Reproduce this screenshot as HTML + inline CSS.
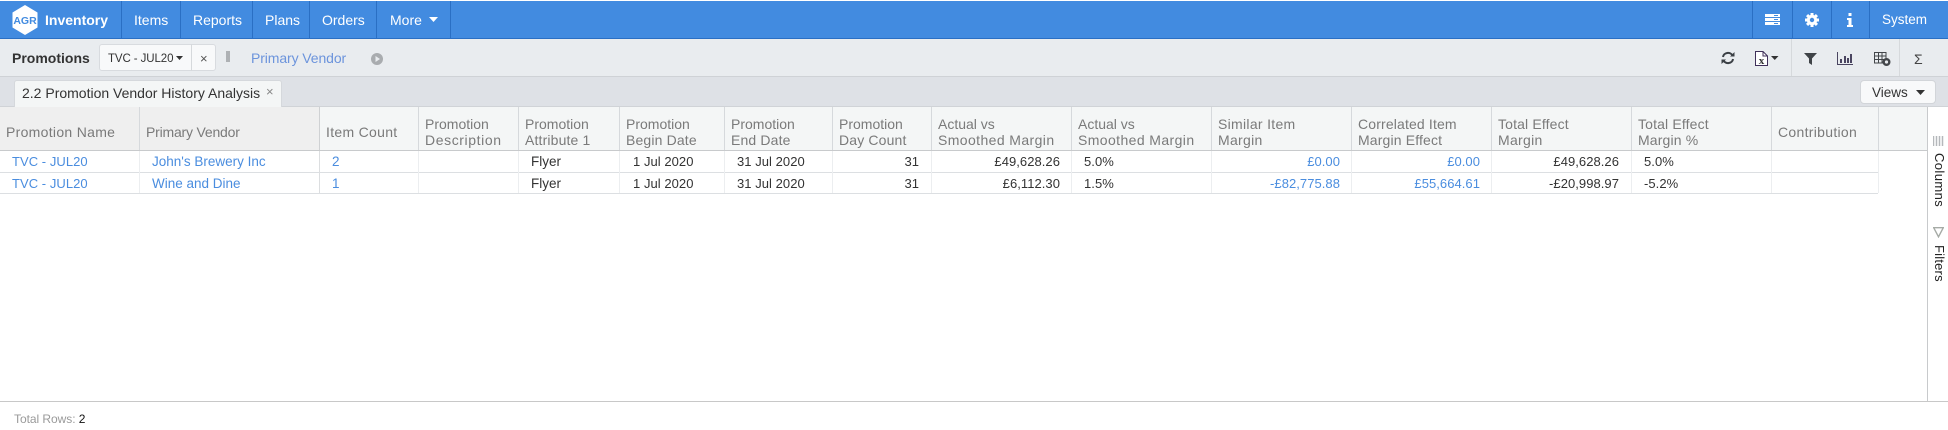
<!DOCTYPE html>
<html><head><meta charset="utf-8"><style>
html,body{margin:0;padding:0;width:1948px;height:430px;overflow:hidden;background:#fff;font-family:"Liberation Sans",sans-serif;font-size:14px;color:#333}
.a{position:absolute}
.t{position:absolute;white-space:nowrap;line-height:18px;height:18px}
.n{color:#fff;top:11px}
.h{color:#7a7a7a;letter-spacing:.15px}
.l{color:#4a8ddf}
.c{font-size:13.5px}
.m{font-size:13px;letter-spacing:.05px}
.r{transform:translateX(-100%)}
.v{background:#d6d9dc;width:1px;position:absolute}
</style></head><body>
<div class="a" style="left:0;top:1px;width:1948px;height:37px;background:#428be0;border-bottom:1px solid #2a6fc4"></div>
<svg class="a" style="left:11px;top:4px" width="28" height="32" viewBox="0 0 28 32"><path d="M14 1L26.500 8.500V23.500L14 31L1.500 23.500V8.500Z" fill="#fff"/><text x="14" y="20" font-size="10.500" font-weight="700" fill="#428be0" text-anchor="middle" font-family="Liberation Sans">AGR</text></svg>
<div class="t n" style="left:45px;font-weight:700">Inventory</div>
<div class="v" style="left:121px;top:1px;height:37px;background:#2a6fc4"></div>
<div class="t n" style="left:134px">Items</div>
<div class="v" style="left:180px;top:1px;height:37px;background:#2a6fc4"></div>
<div class="t n" style="left:193px">Reports</div>
<div class="v" style="left:252px;top:1px;height:37px;background:#2a6fc4"></div>
<div class="t n" style="left:265px">Plans</div>
<div class="v" style="left:309px;top:1px;height:37px;background:#2a6fc4"></div>
<div class="t n" style="left:322px">Orders</div>
<div class="v" style="left:376px;top:1px;height:37px;background:#2a6fc4"></div>
<div class="t n" style="left:390px">More</div>
<svg class="a" style="left:429px;top:17px" width="9" height="5"><path d="M0 0H9L4.500 5Z" fill="#fff"/></svg>
<div class="v" style="left:450px;top:1px;height:37px;background:#2a6fc4"></div>
<div class="v" style="left:1752px;top:1px;height:37px;background:#2a6fc4"></div>
<div class="v" style="left:1792px;top:1px;height:37px;background:#2a6fc4"></div>
<div class="v" style="left:1831px;top:1px;height:37px;background:#2a6fc4"></div>
<div class="v" style="left:1869px;top:1px;height:37px;background:#2a6fc4"></div>
<svg class="a" style="left:1765px;top:14px" width="15" height="11"><path d="M0 0H15V3H0ZM0 4H15V7H0ZM0 8H15V11H0Z" fill="#fff"/><path d="M9 1.500H13M9 5.500H13M9 9.500H13" stroke="#428be0" stroke-width="1"/></svg>
<svg class="a" style="left:1805px;top:13px" width="14" height="14" viewBox="0 0 14 14"><g fill="#fff"><rect x="5.500" y="0" width="3" height="14"/><rect x="0" y="5.500" width="14" height="3"/><rect x="5.500" y="0" width="3" height="14" transform="rotate(45 7 7)"/><rect x="5.500" y="0" width="3" height="14" transform="rotate(-45 7 7)"/><circle cx="7" cy="7" r="5.200"/></g><circle cx="7" cy="7" r="2.200" fill="#428be0"/></svg>
<svg class="a" style="left:1847px;top:13px" width="6" height="14"><path d="M1.500 0H4.500V3H1.500ZM0 5H4.500V12H6V14H0V12H1.500V7H0Z" fill="#fff"/></svg>
<div class="t n" style="left:1882px;font-size:13.500px">System</div>

<div class="a" style="left:0;top:39px;width:1948px;height:37px;background:#e9ecef;border-bottom:1px solid #cfd2d6"></div>
<div class="a" style="left:0;top:77px;width:1948px;height:29px;background:#dee1e6;border-bottom:1px solid #d0d3d7"></div>
<div class="t" style="left:12px;top:49px;font-weight:700">Promotions</div>
<div class="a" style="left:99px;top:44px;width:117px;height:27px;background:#f8f9fa;border:1px solid #d8dbdf;border-radius:3px;box-sizing:border-box"></div>
<div class="v" style="left:191px;top:44px;height:27px"></div>
<div class="t" style="left:108px;top:50px;font-size:11.500px;letter-spacing:-.1px">TVC - JUL20</div>
<svg class="a" style="left:176px;top:56px" width="8" height="4"><path d="M0 0H7L3.500 4Z" fill="#333"/></svg>
<div class="t" style="left:200px;top:50px;color:#555;font-size:13px">×</div>
<div class="a" style="left:226px;top:51px;width:4px;height:11px;background:#aeb1b4"></div>
<div class="t" style="left:251px;top:49px;color:#6c94dc;letter-spacing:-.1px">Primary Vendor</div>
<svg class="a" style="left:371px;top:53px" width="12" height="12"><circle cx="6" cy="6" r="6" fill="#a9acaf"/><path d="M4.500 3V9L9 6Z" fill="#e9ecef"/></svg>

<svg class="a" style="left:1721px;top:51px" width="14" height="14" viewBox="0 0 14 14" fill="none" stroke="#3a3f44" stroke-width="2"><path d="M2 6A5 4.500 0 0 1 11.500 4.500M12 8A5 4.500 0 0 1 2.500 9.500"/><path d="M9 5.500H13.500V1Z M5 8.500H.5V13Z" fill="#3a3f44" stroke="none"/></svg>
<svg class="a" style="left:1755px;top:51px" width="13" height="15" viewBox="0 0 13 15"><path d="M.5 .5H8L12.500 5V14.500H.5Z" fill="#fff" stroke="#40305a"/><path d="M8 .5V5H12.500" fill="none" stroke="#40305a"/><text x="6.500" y="13" font-size="11" font-family="Liberation Serif" font-weight="700" text-anchor="middle" fill="#333">x</text></svg>
<svg class="a" style="left:1771px;top:56px" width="8" height="4"><path d="M0 0H7.500L3.750 4Z" fill="#333"/></svg>
<div class="v" style="left:1791px;top:39px;height:37px"></div>
<svg class="a" style="left:1804px;top:53px" width="13" height="12"><path d="M0 0H13L8 5.500V12L5 10V5.500Z" fill="#3f4347"/></svg>
<svg class="a" style="left:1837px;top:52px" width="16" height="13"><path d="M.5 0V12.500H16" fill="none" stroke="#4a4560"/><path d="M3 7H5V11H3ZM7 4H9V11H7ZM10 6H12V11H10ZM13 2H15V11H13Z" fill="#4a4560"/></svg>
<svg class="a" style="left:1874px;top:52px" width="17" height="14" viewBox="0 0 17 14"><path d="M.5 .5H12V11H.5ZM.5 4H12M.5 7.500H12M4.500 .5V11M8 .5V11" fill="none" stroke="#43464a"/><circle cx="12.500" cy="10" r="2.800" fill="#e9ecef" stroke="#43464a" stroke-width="2.400"/></svg>
<div class="v" style="left:1899px;top:39px;height:37px"></div>
<div class="t" style="left:1914px;top:50px;color:#444">Σ</div>

<div class="a" style="left:14px;top:80px;width:268px;height:27px;background:#f4f6f6;border:1px solid #d5d8dc;border-bottom:0;border-radius:3px 3px 0 0;box-sizing:border-box"></div>
<div class="t" style="left:22px;top:84px">2.2 Promotion Vendor History Analysis</div>
<div class="t" style="left:266px;top:83px;color:#888;font-size:13px">×</div>
<div class="a" style="left:1860px;top:80px;width:76px;height:24px;background:#f8f9fa;border:1px solid #d2d5d9;border-radius:4px;box-sizing:border-box"></div>
<div class="t" style="left:1872px;top:84px;font-size:13.500px">Views</div>
<svg class="a" style="left:1916px;top:90px" width="9" height="5"><path d="M0 0H9L4.500 5Z" fill="#333"/></svg>

<div class="a" style="left:0;top:107px;width:1927px;height:43px;background:#f4f6f6;border-bottom:1px solid #c8cacc;box-sizing:content-box"></div>
<div class="a" style="left:0;top:107px;width:319px;height:43px;background:#efefef"></div>
<div class="a" style="left:0;top:172px;width:1878px;height:1px;background:#dcdfe2"></div>
<div class="a" style="left:0;top:193px;width:1878px;height:1px;background:#dcdfe2"></div>
<div class="v" style="left:139px;top:107px;height:43px"></div><div class="v" style="left:139px;top:151px;height:42px;background:#eceef0"></div>
<div class="v" style="left:319px;top:107px;height:43px;background:#cfd1d3"></div><div class="v" style="left:319px;top:151px;height:42px;background:#dcdee0"></div>
<div class="v" style="left:418px;top:107px;height:43px"></div><div class="v" style="left:418px;top:151px;height:42px;background:#eceef0"></div>
<div class="v" style="left:518px;top:107px;height:43px"></div><div class="v" style="left:518px;top:151px;height:42px;background:#eceef0"></div>
<div class="v" style="left:619px;top:107px;height:43px"></div><div class="v" style="left:619px;top:151px;height:42px;background:#eceef0"></div>
<div class="v" style="left:724px;top:107px;height:43px"></div><div class="v" style="left:724px;top:151px;height:42px;background:#eceef0"></div>
<div class="v" style="left:832px;top:107px;height:43px"></div><div class="v" style="left:832px;top:151px;height:42px;background:#eceef0"></div>
<div class="v" style="left:931px;top:107px;height:43px"></div><div class="v" style="left:931px;top:151px;height:42px;background:#eceef0"></div>
<div class="v" style="left:1071px;top:107px;height:43px"></div><div class="v" style="left:1071px;top:151px;height:42px;background:#eceef0"></div>
<div class="v" style="left:1211px;top:107px;height:43px"></div><div class="v" style="left:1211px;top:151px;height:42px;background:#eceef0"></div>
<div class="v" style="left:1351px;top:107px;height:43px"></div><div class="v" style="left:1351px;top:151px;height:42px;background:#eceef0"></div>
<div class="v" style="left:1491px;top:107px;height:43px"></div><div class="v" style="left:1491px;top:151px;height:42px;background:#eceef0"></div>
<div class="v" style="left:1631px;top:107px;height:43px"></div><div class="v" style="left:1631px;top:151px;height:42px;background:#eceef0"></div>
<div class="v" style="left:1771px;top:107px;height:43px"></div><div class="v" style="left:1771px;top:151px;height:42px;background:#eceef0"></div>
<div class="v" style="left:1878px;top:107px;height:43px"></div><div class="v" style="left:1878px;top:151px;height:42px;background:#eceef0"></div>
<div class="v" style="left:1927px;top:107px;height:294px;background:#c8cacc"></div>

<div class="t h" style="left:6px;top:123px;letter-spacing:.3px">Promotion Name</div>
<div class="t h" style="left:146px;top:123px;letter-spacing:-.2px">Primary Vendor</div>
<div class="t h" style="left:326px;top:123px;letter-spacing:.3px">Item Count</div>
<div class="t h" style="left:425px;top:115px;letter-spacing:0">Promotion</div><div class="t h" style="left:425px;top:131px;letter-spacing:.6px">Description</div>
<div class="t h" style="left:525px;top:115px;letter-spacing:0">Promotion</div><div class="t h" style="left:525px;top:131px">Attribute 1</div>
<div class="t h" style="left:626px;top:115px;letter-spacing:0">Promotion</div><div class="t h" style="left:626px;top:131px">Begin Date</div>
<div class="t h" style="left:731px;top:115px;letter-spacing:0">Promotion</div><div class="t h" style="left:731px;top:131px">End Date</div>
<div class="t h" style="left:839px;top:115px;letter-spacing:0">Promotion</div><div class="t h" style="left:839px;top:131px">Day Count</div>
<div class="t h" style="left:938px;top:115px;letter-spacing:0">Actual vs</div><div class="t h" style="left:938px;top:131px;letter-spacing:.4px">Smoothed Margin</div>
<div class="t h" style="left:1078px;top:115px;letter-spacing:0">Actual vs</div><div class="t h" style="left:1078px;top:131px;letter-spacing:.4px">Smoothed Margin</div>
<div class="t h" style="left:1218px;top:115px;letter-spacing:.3px">Similar Item</div><div class="t h" style="left:1218px;top:131px;letter-spacing:.3px">Margin</div>
<div class="t h" style="left:1358px;top:115px">Correlated Item</div><div class="t h" style="left:1358px;top:131px">Margin Effect</div>
<div class="t h" style="left:1498px;top:115px">Total Effect</div><div class="t h" style="left:1498px;top:131px;letter-spacing:.3px">Margin</div>
<div class="t h" style="left:1638px;top:115px">Total Effect</div><div class="t h" style="left:1638px;top:131px">Margin %</div>
<div class="t h" style="left:1778px;top:123px;letter-spacing:.3px">Contribution</div>

<div class="t l m" style="left:12px;top:153px">TVC - JUL20</div>
<div class="t l c" style="left:152px;top:153px">John's Brewery Inc</div>
<div class="t l c" style="left:332px;top:153px">2</div>
<div class="t c" style="left:531px;top:153px">Flyer</div>
<div class="t m" style="left:633px;top:153px">1 Jul 2020</div>
<div class="t m" style="left:737px;top:153px">31 Jul 2020</div>
<div class="t r m" style="left:919px;top:153px">31</div>
<div class="t r m" style="left:1060px;top:153px">£49,628.26</div>
<div class="t m" style="left:1084px;top:153px">5.0%</div>
<div class="t l r m" style="left:1340px;top:153px">£0.00</div>
<div class="t l r m" style="left:1480px;top:153px">£0.00</div>
<div class="t r m" style="left:1619px;top:153px">£49,628.26</div>
<div class="t m" style="left:1644px;top:153px">5.0%</div>

<div class="t l m" style="left:12px;top:175px">TVC - JUL20</div>
<div class="t l c" style="left:152px;top:175px">Wine and Dine</div>
<div class="t l c" style="left:332px;top:175px">1</div>
<div class="t c" style="left:531px;top:175px">Flyer</div>
<div class="t m" style="left:633px;top:175px">1 Jul 2020</div>
<div class="t m" style="left:737px;top:175px">31 Jul 2020</div>
<div class="t r m" style="left:919px;top:175px">31</div>
<div class="t r m" style="left:1060px;top:175px">£6,112.30</div>
<div class="t m" style="left:1084px;top:175px">1.5%</div>
<div class="t l r m" style="left:1340px;top:175px">-£82,775.88</div>
<div class="t l r m" style="left:1480px;top:175px">£55,664.61</div>
<div class="t r m" style="left:1619px;top:175px">-£20,998.97</div>
<div class="t m" style="left:1644px;top:175px">-5.2%</div>

<svg class="a" style="left:1933px;top:136px" width="11" height="10"><path d="M.5 0V10M3.500 0V10M6.500 0V10M9.500 0V10" stroke="#b5b8bb" stroke-width="1.500"/></svg>
<div class="t" style="left:1933px;top:153px;transform-origin:0 0;transform:rotate(90deg) translateY(-13px);font-size:13px;color:#222;letter-spacing:.4px;line-height:13px;height:13px">Columns</div>
<svg class="a" style="left:1933px;top:227px" width="11" height="11"><path d="M.7 .7H10.300L5.500 9.800Z" fill="#fff" stroke="#a6aba6" stroke-width="1.400"/></svg>
<div class="t" style="left:1933px;top:245px;transform-origin:0 0;transform:rotate(90deg) translateY(-13px);font-size:13px;color:#222;letter-spacing:.2px;line-height:13px;height:13px">Filters</div>

<div class="a" style="left:0;top:401px;width:1948px;height:1px;background:#c8c8c8"></div>
<div class="t" style="left:14px;top:410px;font-size:12px;color:#9a9a9a;letter-spacing:-.05px">Total Rows: <span style="color:#111">2</span></div>
</body></html>
